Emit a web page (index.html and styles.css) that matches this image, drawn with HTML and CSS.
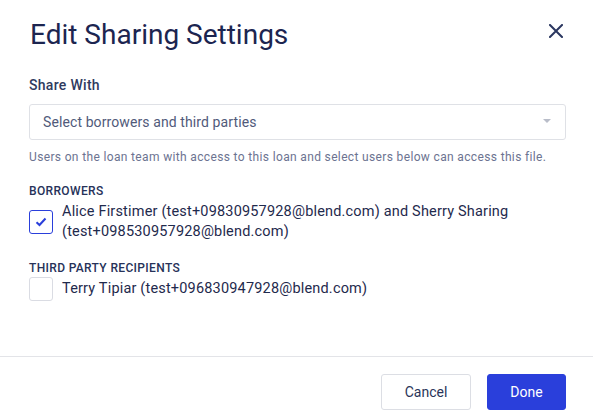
FILE: index.html
```html
<!DOCTYPE html>
<html>
<head>
<meta charset="utf-8">
<link rel="stylesheet" href="styles.css">
</head>
<body>
<div class="modal">
  <div class="body">
    <div class="header">
      <h1 class="title">Edit Sharing Settings</h1>
      <button class="close" aria-label="Close">
        <svg width="14" height="14" viewBox="0 0 14 14"><path d="M1 1L13 13M13 1L1 13" stroke="#2b3760" stroke-width="2" stroke-linecap="square"/></svg>
      </button>
    </div>
    <div class="label">Share With</div>
    <div class="select">
      <span>Select borrowers and third parties</span>
      <svg class="caret" width="8" height="4" viewBox="0 0 8 4"><path d="M0 0H8L4 4Z" fill="#b9bdc9"/></svg>
    </div>
    <div class="help">Users on the loan team with access to this loan and select users below can access this file.</div>
    <div class="group">
      <div class="group-title">BORROWERS</div>
      <label class="option first">
        <span class="box checked">
          <svg width="12" height="10" viewBox="0 0 12 10"><path d="M1.5 5.2L4.5 8L10.5 1.5" fill="none" stroke="#2a3fdb" stroke-width="2"/></svg>
        </span>
        <span class="opt-text">Alice Firstimer (test+09830957928@blend.com) and Sherry Sharing (test+098530957928@blend.com)</span>
      </label>
    </div>
    <div class="group second">
      <div class="group-title">THIRD PARTY RECIPIENTS</div>
      <label class="option">
        <span class="box"></span>
        <span class="opt-text">Terry Tipiar (test+096830947928@blend.com)</span>
      </label>
    </div>
  </div>
  <div class="footer">
    <button class="btn cancel">Cancel</button>
    <button class="btn done">Done</button>
  </div>
</div>
</body>
</html>
```

FILE: styles.css
```css
* { box-sizing: border-box; }
html, body { margin: 0; padding: 0; background: #fff; }
body { font-family: Roboto, "Noto Sans", sans-serif; color: #1f2a4d; }
.modal { width: 593px; height: 417px; display: flex; flex-direction: column; }
.body { padding: 0 27px 0 29px; height: 357px; border-bottom: 1px solid #e3e4e8; }
.header { display: flex; justify-content: space-between; align-items: flex-start; padding-top: 18px; }
.title { margin: 0 0 0 1px; font-size: 28px; font-weight: 400; line-height: 34px; color: #1c2550; }
.close { border: 0; background: none; padding: 0; margin: 6px 3px 0 0; width: 14px; height: 14px; display: block; }
.close svg { display: block; }
.label { margin-top: 24px; font-size: 14px; font-weight: 500; color: #2f3a5e; line-height: 18px; letter-spacing: 0.3px; }
.select { margin-top: 10px; height: 36px; border: 1px solid #dfe1e6; border-radius: 3px; display: flex; align-items: center; justify-content: space-between; padding: 0 14px 0 13px; font-size: 14px; color: #515a7a; letter-spacing: 0.1px; }
.caret { display: block; margin-bottom: 2px; }
.help { margin-top: 9px; font-size: 12px; color: #6c7391; line-height: 16px; letter-spacing: 0.35px; }
.group { margin-top: 19px; }
.group-title { font-size: 12px; font-weight: 500; color: #273259; line-height: 14px; letter-spacing: 0.35px; }
.option { display: flex; align-items: center; margin-top: 2px; }
.option.first { margin-top: 4px; }
.box { flex: none; width: 24px; height: 24px; border: 1px solid #dadce3; border-radius: 3px; display: flex; align-items: center; justify-content: center; }
.box.checked { border-color: #2a3fdb; }
.box svg { display: block; }
.opt-text { margin-left: 9px; font-size: 14.5px; line-height: 20px; color: #1f2a4d; letter-spacing: 0.18px; }
.footer { display: flex; justify-content: flex-end; gap: 16px; padding: 17px 27px 0 0; }
.btn { height: 36px; border-radius: 3px; font-family: Roboto, "Noto Sans", sans-serif; font-size: 14px; padding: 0; }
.cancel { width: 90px; background: #fff; border: 1px solid #dcdee4; color: #2a3459; }
.done { width: 79px; background: #2a3fdb; border: 1px solid #2a3fdb; color: #fff; }
```
